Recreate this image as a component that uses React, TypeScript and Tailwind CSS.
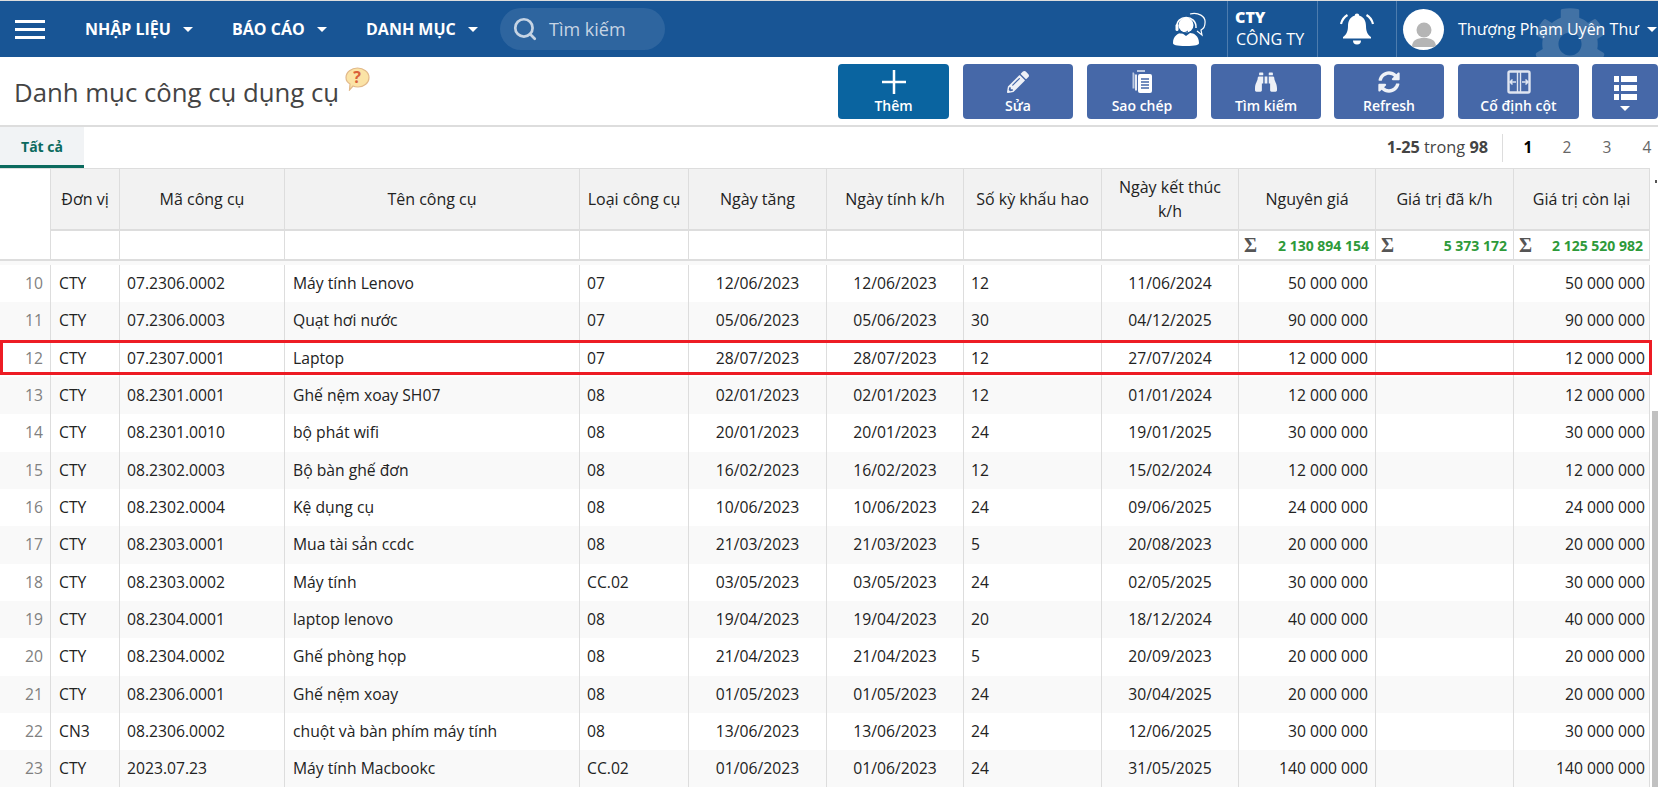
import React from "react";
import { FaBinoculars, FaCog, FaPencilAlt, FaSyncAlt } from "react-icons/fa";
import { Search } from "lucide-react";

const COLS = "grid grid-cols-[51px_69px_165px_295px_109px_138px_137px_138px_137px_137px_138px_136px]";

type Row = [string, string, string, string, string, string, string, string, string, string, string];

const rows: Row[] = [
  ["10", "CTY", "07.2306.0002", "Máy tính Lenovo", "07", "12/06/2023", "12/06/2023", "12", "11/06/2024", "50 000 000", "50 000 000"],
  ["11", "CTY", "07.2306.0003", "Quạt hơi nước", "07", "05/06/2023", "05/06/2023", "30", "04/12/2025", "90 000 000", "90 000 000"],
  ["12", "CTY", "07.2307.0001", "Laptop", "07", "28/07/2023", "28/07/2023", "12", "27/07/2024", "12 000 000", "12 000 000"],
  ["13", "CTY", "08.2301.0001", "Ghế nệm xoay SH07", "08", "02/01/2023", "02/01/2023", "12", "01/01/2024", "12 000 000", "12 000 000"],
  ["14", "CTY", "08.2301.0010", "bộ phát wifi", "08", "20/01/2023", "20/01/2023", "24", "19/01/2025", "30 000 000", "30 000 000"],
  ["15", "CTY", "08.2302.0003", "Bộ bàn ghế đơn", "08", "16/02/2023", "16/02/2023", "12", "15/02/2024", "12 000 000", "12 000 000"],
  ["16", "CTY", "08.2302.0004", "Kệ dụng cụ", "08", "10/06/2023", "10/06/2023", "24", "09/06/2025", "24 000 000", "24 000 000"],
  ["17", "CTY", "08.2303.0001", "Mua tài sản ccdc", "08", "21/03/2023", "21/03/2023", "5", "20/08/2023", "20 000 000", "20 000 000"],
  ["18", "CTY", "08.2303.0002", "Máy tính", "CC.02", "03/05/2023", "03/05/2023", "24", "02/05/2025", "30 000 000", "30 000 000"],
  ["19", "CTY", "08.2304.0001", "laptop lenovo", "08", "19/04/2023", "19/04/2023", "20", "18/12/2024", "40 000 000", "40 000 000"],
  ["20", "CTY", "08.2304.0002", "Ghế phòng họp", "08", "21/04/2023", "21/04/2023", "5", "20/09/2023", "20 000 000", "20 000 000"],
  ["21", "CTY", "08.2306.0001", "Ghế nệm xoay", "08", "01/05/2023", "01/05/2023", "24", "30/04/2025", "20 000 000", "20 000 000"],
  ["22", "CN3", "08.2306.0002", "chuột và bàn phím máy tính", "08", "13/06/2023", "13/06/2023", "24", "12/06/2025", "30 000 000", "30 000 000"],
  ["23", "CTY", "2023.07.23", "Máy tính Macbookc", "CC.02", "01/06/2023", "01/06/2023", "24", "31/05/2025", "140 000 000", "140 000 000"],
];

const headers = ["Đơn vị", "Mã công cụ", "Tên công cụ", "Loại công cụ", "Ngày tăng", "Ngày tính k/h", "Số kỳ khấu hao", "Ngày kết thúc k/h", "Nguyên giá", "Giá trị đã k/h", "Giá trị còn lại"];

function Caret({ className = "" }: { className?: string }) {
  return <span className={"inline-block h-0 w-0 border-x-[5px] border-t-[5px] border-x-transparent border-t-white " + className} />;
}

function NavItem({ label, className }: { label: string; className: string }) {
  return (
    <div className={"flex items-center gap-[12px] text-[16px] font-bold text-white " + className}>
      <span>{label}</span>
      <Caret />
    </div>
  );
}

function CopyIcon() {
  return (
    <svg width="22" height="24" viewBox="0 0 22 24" fill="none">
      <path d="M6 1h8M3 3.500h-.5v15" stroke="#e6ebf4" strokeWidth="2" opacity="0.75" />
      <path d="M5 4.500h-.0v16" stroke="#e6ebf4" strokeWidth="2" />
      <rect x="7" y="4" width="14" height="19" rx="2" fill="#fff" />
      <path d="M10 9h8M10 12h8M10 15h8M10 18h8" stroke="#4668a8" strokeWidth="1.400" />
    </svg>
  );
}

function PinIcon() {
  return (
    <svg width="24" height="24" viewBox="0 0 24 24" fill="none">
      <rect x="1.500" y="1.500" width="21" height="21" rx="1.500" stroke="#dfe5f1" strokeWidth="2.400" />
      <path d="M10.500 1v22M13.500 1v22" stroke="#dfe5f1" strokeWidth="1.400" />
      <path d="M3 12h6M5.500 9.500l-2.500 2.500 2.500 2.500M21 12h-6M18.500 9.500l2.500 2.500-2.500 2.500" stroke="#dfe5f1" strokeWidth="1.500" />
    </svg>
  );
}

function ListIcon() {
  return (
    <svg width="23" height="24" viewBox="0 0 23 24" fill="#fff">
      <rect x="0" y="0" width="5" height="6" />
      <rect x="7" y="0" width="16" height="6" />
      <rect x="0" y="9" width="5" height="6" />
      <rect x="7" y="9" width="16" height="6" />
      <rect x="0" y="18" width="5" height="6" />
      <rect x="7" y="18" width="16" height="6" />
    </svg>
  );
}

function ToolButton({ icon, label, className }: { icon: React.ReactNode; label?: string; className: string }) {
  return (
    <div className={"flex h-[55px] flex-col items-center rounded-[4px] text-white " + className}>
      <div className="flex h-[32px] items-center pt-[3px]">{icon}</div>
      {label ? <div className="text-[14px] font-semibold leading-[20px]">{label}</div> : null}
    </div>
  );
}

function HeadsetIcon() {
  return (
    <svg width="34" height="34" viewBox="0 0 34 34" fill="none">
      <circle cx="13" cy="13" r="7.500" fill="#fff" />
      <path d="M4 16c-2-14 20-14 19 0" stroke="#fff" strokeWidth="1.500" />
      <rect x="2.500" y="12" width="3" height="7" rx="1.500" fill="#fff" />
      <path d="M17 2c8-2 16 2 15 9 0 4-2 6-4 7l1 5-5-4" stroke="#fff" strokeWidth="1.200" />
      <path d="M0 31c0-7 5-10 9-10l4 3 4-3c4 0 9 3 9 10 0 2-3 3-13 3S0 33 0 31z" fill="#fff" />
      <path d="M6 20c2 2 6 1 9-1" stroke="#185595" strokeWidth="1" />
    </svg>
  );
}

function BellIcon() {
  return (
    <svg width="34" height="34" viewBox="0 0 34 34" fill="#fff">
      <path d="M17 1.500a2.500 2.500 0 0 1 2.400 2.200C24 5 26 9 26 14c0 6 2 9 5 11v1.500H3V25c3-2 5-5 5-11 0-5 2-9 6.600-10.300A2.500 2.500 0 0 1 17 1.500z" />
      <path d="M13 28.500h8a4 4 0 0 1-8 0z" />
      <path d="M7.500 3C4 5 2 8 1 12M26.500 3c3.500 2 5.500 5 6.500 9" stroke="#fff" strokeWidth="2.200" fill="none" />
    </svg>
  );
}

function HelpIcon() {
  return (
    <div className="relative h-[24px] w-[25px]">
      <svg width="25" height="24" viewBox="0 0 25 24" className="absolute inset-0">
        <path d="M12.500 1C18.500 1 24 5 24 10.500S19 20 13 20c-2 0-4-.4-5-1l-3.500 4 .5-6C2.500 15.500 1 13 1 10.500 1 5 6.500 1 12.500 1z" fill="#fbe3a6" stroke="#e2b98a" strokeWidth="1.200" />
      </svg>
      <span className="absolute left-[8px] top-[0px] text-[16px] font-bold leading-[20px] text-[#d9603a]">?</span>
    </div>
  );
}

const cell = "flex items-center border-r border-[#dddddd] text-[15.700px] text-[#222222]";

export default function App() {
  return (
    <div className="flex h-[800px] w-[1658px] flex-col overflow-hidden bg-white font-['Open_Sans','Noto_Sans',sans-serif]">
      {/* Top bar */}
      <header className="relative h-[57px] shrink-0 overflow-hidden border-t border-[#dddddd] bg-[#185595]">
        <FaCog className="absolute left-[1533px] top-[6px] text-[#4272a5]" size={74} />
        <div className="relative flex h-full items-center">
          <div className="ml-[15px] flex w-[30px] flex-col gap-[5px]">
            <div className="h-[3px] bg-white" />
            <div className="h-[3px] bg-white" />
            <div className="h-[3px] bg-white" />
          </div>
          <NavItem label="NHẬP LIỆU" className="ml-[40px] w-[147px]" />
          <NavItem label="BÁO CÁO" className="w-[134px]" />
          <NavItem label="DANH MỤC" className="w-[134px]" />
          <div className="flex h-[42px] w-[165px] items-center rounded-full bg-[#2e659f] pl-[12px]">
            <Search size={26} strokeWidth={2.500} className="text-[#c6d4e4]" />
            <span className="ml-[11px] text-[18px] text-[#c6d4e4]">Tìm kiếm</span>
          </div>
          <div className="ml-auto flex h-full items-center">
            <div className="mr-[20px]"><HeadsetIcon /></div>
            <div className="flex h-full w-[90px] flex-col justify-center border-l border-[#4d7cae] pl-[7px] text-white">
              <div className="text-[16px] font-extrabold leading-[20px]">CTY</div>
              <div className="pl-[1px] text-[16px] leading-[25px]">CÔNG TY</div>
            </div>
            <div className="flex h-full w-[79px] items-center justify-center border-l border-[#4d7cae]"><BellIcon /></div>
            <div className="flex h-full w-[262px] items-center border-l border-[#4d7cae] pl-[6px] text-white">
              <div className="flex h-[41px] w-[41px] items-end justify-center overflow-hidden rounded-full bg-white">
                <svg width="30" height="32" viewBox="0 0 30 32" fill="#b5b5b5">
                  <circle cx="15" cy="12" r="7.500" />
                  <path d="M3 29c0-7 5-9 12-9s12 2 12 9z" />
                </svg>
              </div>
              <span className="ml-[14px] whitespace-nowrap text-[16px]">Thượng Phạm Uyên Thư</span>
              <Caret className="ml-[8px]" />
            </div>
          </div>
        </div>
      </header>

      {/* Title + toolbar */}
      <div className="flex h-[70px] shrink-0 border-b-2 border-[#dddddd] pt-[7px]">
        <div className="flex items-start pl-[14px]">
          <h1 className="mt-[10px] text-[25.750px] font-medium leading-[36px] text-[#444444]">Danh mục công cụ dụng cụ</h1>
          <div className="ml-[6px] mt-[3px]"><HelpIcon /></div>
        </div>
        <div className="ml-auto flex">
          <ToolButton className="w-[111px] bg-[#0a64a0]" label="Thêm" icon={
            <svg width="24" height="24" viewBox="0 0 24 24"><path d="M12 0v24M0 12h24" stroke="#fff" strokeWidth="2.500" /></svg>
          } />
          <ToolButton className="ml-[14px] w-[110px] bg-[#4668a8]" label="Sửa" icon={<FaPencilAlt size={22} className="text-[#eef1f7]" />} />
          <ToolButton className="ml-[14px] w-[110px] bg-[#4668a8]" label="Sao chép" icon={<CopyIcon />} />
          <ToolButton className="ml-[14px] w-[110px] bg-[#4668a8]" label="Tìm kiếm" icon={<FaBinoculars size={22} className="text-[#eef1f7]" />} />
          <ToolButton className="ml-[13px] w-[110px] bg-[#4668a8]" label="Refresh" icon={<FaSyncAlt size={22} className="text-[#eef1f7]" />} />
          <ToolButton className="ml-[14px] w-[121px] bg-[#4668a8]" label="Cố định cột" icon={<PinIcon />} />
          <div className="ml-[13px] flex h-[55px] w-[66px] flex-col items-center rounded-[4px] bg-[#4668a8] pt-[12px]">
            <ListIcon />
            <Caret className="mt-[6px]" />
          </div>
        </div>
      </div>

      {/* Tabs + pager */}
      <div className="flex h-[41px] shrink-0 items-stretch">
        <div className="flex w-[84px] items-center justify-center border-b-[3px] border-[#0b6a5e] bg-[#f1f3f5] text-[14px] font-bold text-[#0b6a5e]">Tất cả</div>
        <div className="ml-auto flex items-center text-[16.300px] text-[#444444]">
          <span className="whitespace-nowrap"><b>1-25</b> trong <b>98</b></span>
          <div className="ml-[14px] h-[28px] w-px bg-[#dddddd]" />
          <div className="flex w-[155px] text-[15.500px] text-[#666666]">
            <span className="w-[50px] text-center font-bold text-black">1</span>
            <span className="w-[28px] text-center">2</span>
            <span className="w-[52px] text-center">3</span>
            <span className="w-[25px] pl-[3px] text-center">4</span>
          </div>
        </div>
      </div>

      {/* Grid */}
      <div className="flex min-h-0 flex-1">
        <div className="h-[619px] w-[1650px] shrink-0 overflow-x-visible overflow-y-clip">
          <div className={COLS + " border-b-2 border-t border-[#dddddd]"}>
            <div className="row-span-2 border-r border-[#dddddd]" />
            {headers.map((h, i) => (
              <div key={h} className={"flex h-[62px] items-center justify-center border-b-2 border-r border-[#dddddd] bg-[#f2f2f2] text-center text-[16px] font-medium leading-[24px] text-[#222222] " + (i === 7 ? "px-[8px]" : "px-[2px]")}>
                {h}
              </div>
            ))}
            {headers.map((h, i) => (
              <div key={h} className="flex h-[28px] items-center justify-between border-r border-[#dddddd] pr-[6px]">
                {i === 8 || i === 9 || i === 10 ? (
                  <>
                    <span className="pl-[5px] font-['Liberation_Serif',serif] text-[20px] font-bold text-[#555555]">Σ</span>
                    <span className="text-[14px] font-bold text-[#2e9a3a]">{i === 8 ? "2 130 894 154" : i === 9 ? "5 373 172" : "2 125 520 982"}</span>
                  </>
                ) : null}
              </div>
            ))}
          </div>
          <div className="h-[4px] bg-[#f9f9f9]" />
          {rows.map((r, i) => (
            <div key={r[0]} className={COLS + " relative h-[37.350px] " + (i % 2 === 1 ? "bg-[#f9f9f9]" : "bg-white")}>
              <div className={cell + " justify-end pr-[7px] !text-[#808080]"}>{r[0]}</div>
              <div className={cell + " pl-[8px]"}>{r[1]}</div>
              <div className={cell + " pl-[7px]"}>{r[2]}</div>
              <div className={cell + " pl-[8px]"}>{r[3]}</div>
              <div className={cell + " pl-[7px]"}>{r[4]}</div>
              <div className={cell + " justify-center"}>{r[5]}</div>
              <div className={cell + " justify-center"}>{r[6]}</div>
              <div className={cell + " pl-[7px]"}>{r[7]}</div>
              <div className={cell + " justify-center"}>{r[8]}</div>
              <div className={cell + " justify-end pr-[7px]"}>{r[9]}</div>
              <div className={cell} />
              <div className={cell + " justify-end pr-[4px]"}>{r[10]}</div>
              {r[0] === "12" ? <div className="pointer-events-none absolute left-0 right-[-2px] top-[0.500px] h-[35px] border-[3px] border-[#ed1c24]" /> : null}
            </div>
          ))}
        </div>
        <div className="flex h-[619px] w-[8px] flex-col justify-between">
          <div className="ml-[5px] mt-[12px] h-[3px] w-[2px] bg-[#555555]" />
          <div className="ml-[2px] h-[376px] w-[6px] bg-[#c1c1c1]" />
        </div>
      </div>
    </div>
  );
}
